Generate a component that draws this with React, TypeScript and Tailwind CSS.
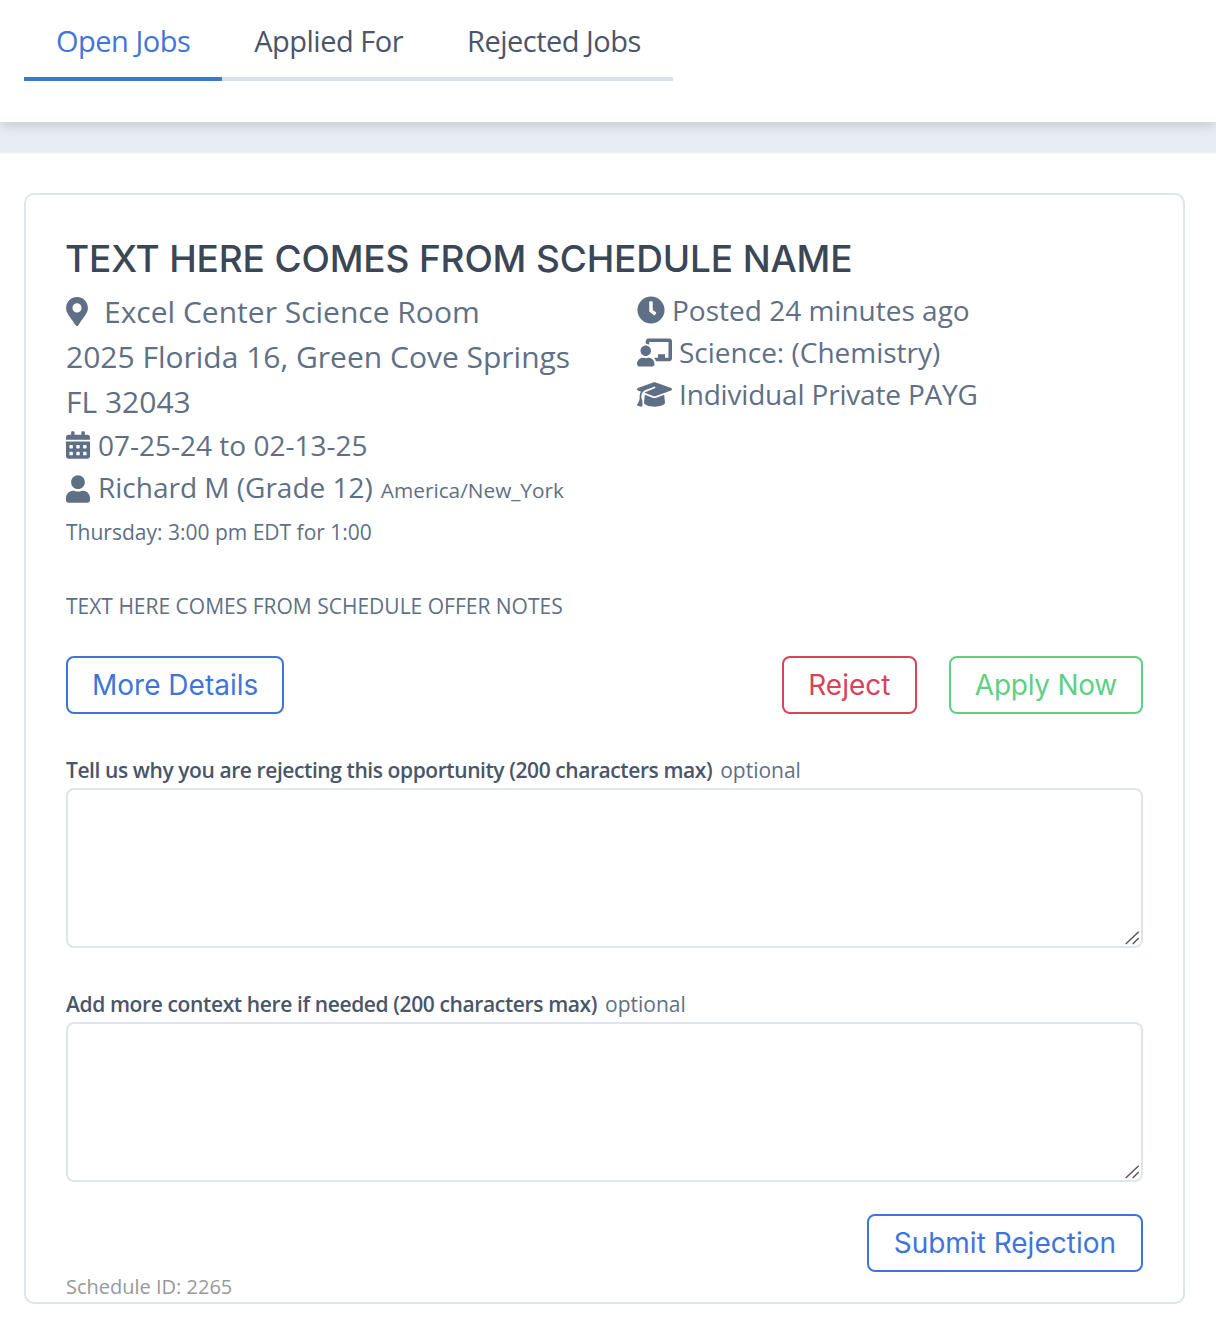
import { FaMapMarkerAlt, FaCalendarAlt, FaUser, FaClock, FaChalkboardTeacher } from "react-icons/fa";
import { FaGraduationCap } from "react-icons/fa6";

const tabs = ["Open Jobs", "Applied For", "Rejected Jobs"];

function Area() {
  return (
    <div className="relative mt-[3px]">
      <textarea className="block w-full h-[160px] border-2 border-[#dde5ef] rounded-lg resize-none" />
      <svg className="absolute right-0 bottom-0 w-5 h-5" viewBox="0 0 20 20" fill="none" stroke="#555" strokeWidth="1.4">
        <path d="M2.7 16 15.7 3.7M9.7 16l6-6" />
      </svg>
    </div>
  );
}

export default function App() {
  return (
    <div className="w-[1216px] h-[1328px] bg-white font-['Open_Sans',sans-serif] text-[#4a5568]">
      {/* Tabs */}
      <div className="h-[122px] bg-white pl-6 relative z-10 shadow-[0_4px_12px_rgba(0,0,0,0.14)]">
        <div className="flex w-fit border-b-4 border-[#d9e1ec] h-[81px]">
          {tabs.map((t, i) => (
            <div
              key={t}
              className={
                i === 0
                  ? "px-8 pt-[22px] h-[81px] text-[29px] leading-[38px] tracking-[-0.5px] text-[#3f75d9] border-b-4 border-[#3f75d9]"
                  : "px-8 pt-[22px] h-[81px] text-[29px] leading-[38px] tracking-[-0.5px]"
              }
            >
              {t}
            </div>
          ))}
        </div>
      </div>
      <div className="h-[31px] bg-[#e8ecf3]" />

      {/* Card */}
      <div className="ml-6 w-[1161px] mt-10 h-[1111px] border-2 border-[#dde5ef] rounded-[10px] pl-10 pr-10 pt-[41px]">
        <h1 className="font-['Inter',sans-serif] text-[37px] leading-[46px] font-medium text-[#3b4656] tracking-[-0.15px] -ml-px mb-[7px]">
          TEXT HERE COMES FROM SCHEDULE NAME
        </h1>
        <div className="flex text-[#5f6f85]">
          <div className="w-[571px]">
            <div className="text-[30px] leading-[45px]">
              <div className="flex items-center">
                <FaMapMarkerAlt className="w-[22px] h-[29px] mr-4 shrink-0" />
                Excel Center Science Room
              </div>
              <div>2025 Florida 16, Green Cove Springs</div>
              <div>FL 32043</div>
            </div>
            <div className="flex items-center text-[28px] leading-[42px]">
              <FaCalendarAlt className="w-6 h-7 mr-2 shrink-0" />
              07-25-24 to 02-13-25
            </div>
            <div className="flex items-baseline text-[28px] leading-[42px]">
              <FaUser className="w-6 h-7 mr-2 shrink-0 self-center" />
              Richard M (Grade 12)
              <span className="ml-2 text-[20.8px]">America/New_York</span>
            </div>
            <div className="text-[21px] leading-[43px]">Thursday: 3:00 pm EDT for 1:00</div>
          </div>
          <div className="text-[28px] leading-[42px]">
            <div className="flex items-center gap-[7px]">
              <FaClock className="text-[28px]" />
              Posted 24 minutes ago
            </div>
            <div className="flex items-center gap-[7px]">
              <FaChalkboardTeacher className="text-[35px]" />
              Science: (Chemistry)
            </div>
            <div className="flex items-center gap-[7px]">
              <FaGraduationCap className="text-[35px]" />
              <span className="tracking-[-0.18px]">Individual Private PAYG</span>
            </div>
          </div>
        </div>

        <p className="mt-[37px] text-[21px] leading-[30px] text-[#5f6f85]">TEXT HERE COMES FROM SCHEDULE OFFER NOTES</p>

        <div className="mt-[35px] flex justify-between">
          <button className="h-[58px] px-6 border-2 border-[#3f75d9] rounded-lg text-[28px] text-[#3f75d9] font-['Inter',sans-serif]">More Details</button>
          <div className="flex gap-8">
            <button className="h-[58px] w-[135px] border-2 border-[#d6435a] rounded-lg text-[28px] text-[#d6435a] font-['Inter',sans-serif]">Reject</button>
            <button className="h-[58px] px-6 border-2 border-[#5fcf85] rounded-lg text-[28px] tracking-[-0.25px] text-[#5fcf85] font-['Inter',sans-serif]">Apply Now</button>
          </div>
        </div>

        <div className="mt-[41px] text-[21px] leading-[30px]">
          <span className="font-semibold tracking-[-0.42px]">Tell us why you are rejecting this opportunity (200 characters max)</span>
          <span className="ml-2 text-[#5f6f85]">optional</span>
        </div>
        <Area />

        <div className="mt-[41px] text-[21px] leading-[30px]">
          <span className="font-semibold tracking-[-0.38px]">Add more context here if needed (200 characters max)</span>
          <span className="ml-2 text-[#5f6f85]">optional</span>
        </div>
        <Area />

        <div className="mt-8 flex justify-end">
          <button className="h-[58px] px-[25px] border-2 border-[#3f75d9] rounded-lg text-[28px] text-[#3f75d9] font-['Inter',sans-serif]">Submit Rejection</button>
        </div>
        <div className="pt-px text-[20px] leading-[28px] text-[#999]">Schedule ID: 2265</div>
      </div>
    </div>
  );
}
